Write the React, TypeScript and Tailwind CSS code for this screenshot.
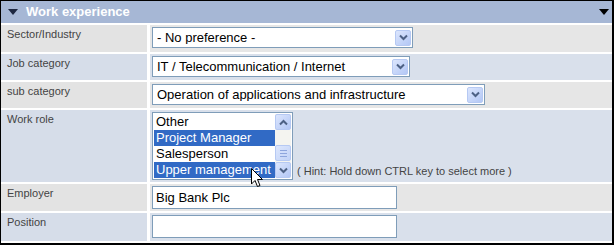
import React from 'react';

const font = { fontFamily: '"Liberation Sans", Arial, sans-serif' };

const Chevron: React.FC<{ up?: boolean }> = ({ up }) => (
  <svg width="9" height="7" viewBox="0 0 9 7" className={up ? 'rotate-180' : ''}>
    <path d="M1 1.5 L4.5 5 L8 1.5" fill="none" stroke="#4d6185" strokeWidth="2" />
  </svg>
);

const ArrowButton: React.FC<{ up?: boolean }> = ({ up }) => (
  <div className="w-[16px] h-[16px] flex items-center justify-center rounded-[2px] border border-[#b6c9f3] bg-gradient-to-br from-[#dce6fd] to-[#b3c7f5]">
    <Chevron up={up} />
  </div>
);

const Select: React.FC<{ value: string; width: string }> = ({ value, width }) => (
  <div className={`${width} h-[21px] flex items-center border border-[#7f9db9] bg-white pl-[4px] pr-[1px]`}>
    <span className="flex-1 text-[13px] text-black leading-none truncate">{value}</span>
    <ArrowButton />
  </div>
);

const Row: React.FC<{ label: string; tone: 'gray' | 'blue'; height: string; pad?: string; children: React.ReactNode }> = ({ label, tone, height, pad = 'pt-[2px]', children }) => {
  const bg = tone === 'gray' ? 'bg-[#e6e6e6]' : 'bg-[#d9e0eb]';
  const labelBg = tone === 'gray' ? 'bg-[#e3e3e3]' : 'bg-[#d6dde9]';
  return (
    <div className={`grid grid-cols-[146px_1fr] gap-[3px] ${height}`}>
      <div className={`${labelBg} pl-[6px] pt-[3px] text-[11px] text-[#444] leading-tight`}>{label}</div>
      <div className={`${bg} pl-[2px] ${pad}`}>{children}</div>
    </div>
  );
};

const roles = [
  { name: 'Other', selected: false },
  { name: 'Project Manager', selected: true },
  { name: 'Salesperson', selected: false },
  { name: 'Upper management', selected: true },
];

export default function App() {
  return (
    <div className="w-[614px] h-[245px] bg-white" style={font}>
      <div className="w-[614px] h-[245px] border-l border-t border-r-2 border-b-2 border-black bg-white flex flex-col">
        <div className="h-[22px] bg-[#a6b7d5] flex items-center pl-[7px] pr-[3px] shrink-0">
          <svg width="10" height="6" viewBox="0 0 10 6"><path d="M0 0 H10 L5 6 Z" fill="#1d2740" /></svg>
          <span className="ml-[8px] text-[13px] font-bold text-white">Work experience</span>
          <svg width="10" height="6" viewBox="0 0 10 6" className="ml-auto"><path d="M0 0 H10 L5 6 Z" fill="#000" /></svg>
        </div>
        <div className="flex flex-col gap-[2px] mt-[2px]">
          <Row label="Sector/Industry" tone="gray" height="h-[27px]">
            <Select value="- No preference -" width="w-[261px]" />
          </Row>
          <Row label="Job category" tone="blue" height="h-[26px]">
            <Select value="IT / Telecommunication / Internet" width="w-[258px]" />
          </Row>
          <Row label="sub category" tone="gray" height="h-[26px]">
            <Select value="Operation of applications and infrastructure" width="w-[333px]" />
          </Row>
          <Row label="Work role" tone="blue" height="h-[72px]" pad="pt-[2px]">
            <div className="flex items-end">
              <div className="relative w-[141px] h-[68px] border border-[#7f9db9] bg-white flex p-[1px]">
                <div className="flex-1 flex flex-col">
                  {roles.map(r => (
                    <div key={r.name} className={`h-[16px] pl-[2px] text-[13px] leading-[16px] whitespace-nowrap ${r.selected ? 'bg-[#316ac5] text-white' : 'text-black'}`}>
                      {r.name}
                    </div>
                  ))}
                </div>
                <div className="w-[16px] flex flex-col justify-between bg-[#f4f4f0]">
                  <ArrowButton up />
                  <div className="h-[16px] mt-auto mb-[1px] flex flex-col items-center justify-center gap-[2px] rounded-[2px] border border-[#b6c9f3] bg-gradient-to-br from-[#dce6fd] to-[#c2d3f7]">
                    <div className="w-[7px] h-px bg-[#8ea6dd]" />
                    <div className="w-[7px] h-px bg-[#8ea6dd]" />
                    <div className="w-[7px] h-px bg-[#8ea6dd]" />
                  </div>
                  <ArrowButton />
                </div>
                <svg className="absolute left-[98px] top-[55px]" width="13" height="20" viewBox="0 0 13 20">
                  <path d="M0.5 0.5 V16 L4 12.5 L6.5 18.5 L9 17.5 L6.5 11.5 H11.5 Z" fill="#fff" stroke="#000" strokeWidth="1" />
                </svg>
              </div>
              <span className="ml-[4px] mb-[1px] text-[11px] text-[#444]">( Hint: Hold down CTRL key to select more )</span>
            </div>
          </Row>
          <Row label="Employer" tone="gray" height="h-[27px]">
            <div className="w-[245px] h-[23px] border border-[#7f9db9] bg-white pl-[3px] flex items-center text-[13px] text-black">Big Bank Plc</div>
          </Row>
          <Row label="Position" tone="blue" height="h-[28px]">
            <div className="w-[245px] h-[23px] border border-[#7f9db9] bg-white" />
          </Row>
        </div>
      </div>
    </div>
  );
}
